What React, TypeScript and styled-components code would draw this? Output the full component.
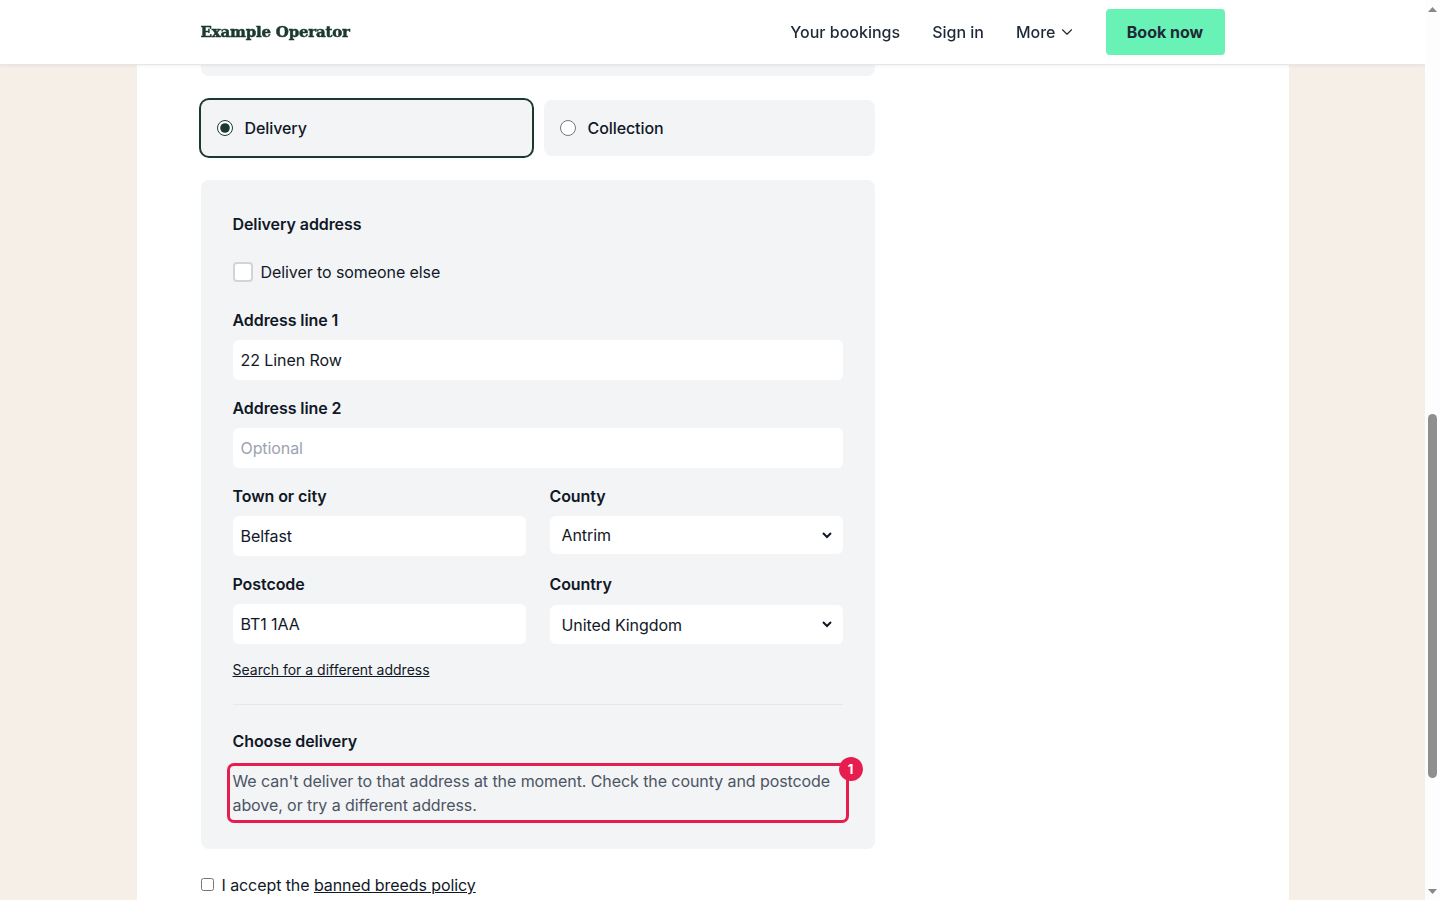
import { useLayoutEffect, useRef, useState } from "react";
import styled, { createGlobalStyle } from "styled-components";
import { ChevronDown } from "lucide-react";

const GlobalStyle = createGlobalStyle`
    * {
        box-sizing: border-box;
    }

    html,
    body {
        height: 100%;
    }

    body {
        margin: 0;
        overflow: hidden;
        background-color: #f6efe8;
        color: #111827;
        font-family: Inter, "Liberation Sans", sans-serif;
        font-size: 16px;
        line-height: 24px;
        letter-spacing: -0.08px;
    }
`;

const ARROW_HEIGHT = 15;

export default function App() {
    const [method, setMethod] = useState("delivery");
    const [thumb, setThumb] = useState({ top: 0, height: 0 });
    const pageRef = useRef<HTMLDivElement>(null);

    const syncThumb = () => {
        const page = pageRef.current;
        if (!page) return;

        const track = page.clientHeight - ARROW_HEIGHT * 2;
        setThumb({
            top: (page.scrollTop / page.scrollHeight) * track,
            height: (page.clientHeight / page.scrollHeight) * track,
        });
    };

    // the reference is photographed part way down the booking form
    useLayoutEffect(() => {
        if (pageRef.current) {
            pageRef.current.scrollTop = 986;
        }
        syncThumb();
    }, []);

    return (
        <Shell>
            <GlobalStyle />
            <Page ref={pageRef} onScroll={syncThumb}>
                <Header>
                    <HeaderInner>
                        <Logo>Example Operator</Logo>
                        <Nav>
                            <NavLink href="#">Your bookings</NavLink>
                            <NavLink href="#">Sign in</NavLink>
                            <MoreButton type="button">
                                More
                                <ChevronDown size={18} strokeWidth={1.5} />
                            </MoreButton>
                            <BookButton type="button">Book now</BookButton>
                        </Nav>
                    </HeaderInner>
                </Header>
                <Main>
                    <Column>
                        <EarlierStep />
                        <MethodGrid>
                            <MethodCard $selected={method === "delivery"}>
                                <MethodRadio
                                    type="radio"
                                    name="method"
                                    checked={method === "delivery"}
                                    onChange={() => setMethod("delivery")}
                                />
                                Delivery
                            </MethodCard>
                            <MethodCard $selected={method === "collection"}>
                                <MethodRadio
                                    type="radio"
                                    name="method"
                                    checked={method === "collection"}
                                    onChange={() => setMethod("collection")}
                                />
                                Collection
                            </MethodCard>
                        </MethodGrid>
                        <Panel>
                            <Heading>Delivery address</Heading>
                            <CheckRow>
                                <BigCheckbox type="checkbox" />
                                Deliver to someone else
                            </CheckRow>
                            <Fields>
                                <Field>
                                    <Label>Address line 1</Label>
                                    <TextInput type="text" defaultValue="22 Linen Row" />
                                </Field>
                                <Field>
                                    <Label>Address line 2</Label>
                                    <TextInput type="text" placeholder="Optional" />
                                </Field>
                                <TwoColumns>
                                    <Field>
                                        <Label>Town or city</Label>
                                        <TextInput type="text" defaultValue="Belfast" />
                                    </Field>
                                    <Field>
                                        <Label>County</Label>
                                        <Select defaultValue="Antrim">
                                            <option>Antrim</option>
                                            <option>Armagh</option>
                                            <option>Down</option>
                                        </Select>
                                    </Field>
                                </TwoColumns>
                                <TwoColumns>
                                    <Field>
                                        <Label>Postcode</Label>
                                        <TextInput type="text" defaultValue="BT1 1AA" />
                                    </Field>
                                    <Field>
                                        <Label>Country</Label>
                                        <Select defaultValue="United Kingdom" $lower>
                                            <option>United Kingdom</option>
                                            <option>Ireland</option>
                                        </Select>
                                    </Field>
                                </TwoColumns>
                            </Fields>
                            <SearchLink href="#">Search for a different address</SearchLink>
                            <Divider />
                            <Heading>Choose delivery</Heading>
                            <ErrorBox>
                                We can't deliver to that address at the moment. Check the county and
                                postcode above, or try a different address.
                                <ErrorBadge>1</ErrorBadge>
                            </ErrorBox>
                        </Panel>
                        <TermsRow>
                            <TermsCheckbox type="checkbox" />
                            <span>
                                I accept the <TermsLink href="#">banned breeds policy</TermsLink>
                            </span>
                        </TermsRow>
                    </Column>
                </Main>
            </Page>
            <ScrollRail>
                <RailArrow>
                    <svg width="9" height="5" viewBox="0 0 9 5">
                        <polygon points="4.5,0 9,5 0,5" fill="#888888" />
                    </svg>
                </RailArrow>
                <RailTrack>
                    <RailThumb style={{ marginTop: thumb.top, height: thumb.height }} />
                </RailTrack>
                <RailArrow $down>
                    <svg width="9" height="5" viewBox="0 0 9 5">
                        <polygon points="0,0 9,0 4.5,5" fill="#888888" />
                    </svg>
                </RailArrow>
            </ScrollRail>
        </Shell>
    );
}

const Shell = styled.div`
    height: 100vh;
    display: flex;
`;

const Page = styled.div`
    flex: 1;
    min-width: 0;
    overflow-y: scroll;
    scrollbar-width: none;
`;

const ScrollRail = styled.div`
    width: 15px;
    flex-shrink: 0;

    display: flex;
    flex-direction: column;

    background-color: #fdfdfd;
`;

const RailArrow = styled.div<{ $down?: boolean }>`
    height: ${ARROW_HEIGHT}px;
    padding: ${(props) => (props.$down ? "3px" : "6px")} 0 0 3px;
    line-height: 0;
`;

const RailTrack = styled.div`
    flex: 1;
    padding: 0 3px;
`;

const RailThumb = styled.div`
    border-radius: 5px;
    background-color: #8f8f8f;
`;

const Header = styled.header`
    position: sticky;
    top: 0;
    z-index: 10;
    height: 65px;
    background-color: #ffffff;
    border-bottom: 1px solid #e5e7eb;
    box-shadow: 0 1px 3px rgba(0, 0, 0, 0.06);
`;

const HeaderInner = styled.div`
    max-width: 1152px;
    height: 64px;
    margin: 0 auto;
    padding: 0 64px;

    display: flex;
    align-items: center;
    justify-content: space-between;
`;

const Logo = styled.div`
    color: #1b3a2d;
    font-family: "DejaVu Serif", "Liberation Serif", serif;
    font-size: 15px;
    font-weight: 700;
    letter-spacing: -0.2px;
    -webkit-text-stroke: 0.5px #1b3a2d;
`;

const Nav = styled.nav`
    display: flex;
    align-items: center;
    gap: 32px;
    letter-spacing: 0;
`;

const NavLink = styled.a`
    color: #1f2937;
    font-weight: 500;
    text-decoration: none;
`;

const MoreButton = styled.button`
    margin-right: -2px;
    padding: 0;

    display: flex;
    align-items: center;
    gap: 2px;

    border: none;
    background: none;
    color: #1f2937;
    font: inherit;
    font-weight: 500;
    letter-spacing: inherit;
`;

const BookButton = styled.button`
    width: 119px;
    height: 46px;

    border: none;
    border-radius: 4px;
    background-color: #69f2b5;
    color: #1f2937;
    font: inherit;
    font-weight: 700;
    letter-spacing: inherit;
`;

const Main = styled.main`
    max-width: 1152px;
    margin: 0 auto;
    padding: 32px 64px 268px;
    background-color: #ffffff;
`;

const Column = styled.div`
    width: 674px;

    display: flex;
    flex-direction: column;
    gap: 24px;
`;

const EarlierStep = styled.section`
    height: 965px;
    border-radius: 8px;
    background-color: #f3f4f6;
`;

const MethodGrid = styled.div`
    display: grid;
    grid-template-columns: 1fr 1fr;
    gap: 12px;
`;

const MethodCard = styled.label<{ $selected: boolean }>`
    height: 56px;
    padding: 0 16px;

    display: flex;
    align-items: center;
    gap: 12px;

    border-radius: 8px;
    background-color: #f3f4f6;
    box-shadow: ${(props) => (props.$selected ? "0 0 0 2px #1b3a2d" : "none")};
    font-weight: 500;
`;

const MethodRadio = styled.input`
    width: 16px;
    height: 16px;
    margin: 0;
    accent-color: #1b3a2d;
`;

const Panel = styled.section`
    padding: 32px;

    display: flex;
    flex-direction: column;

    border-radius: 8px;
    background-color: #f3f4f6;
`;

const Heading = styled.h3`
    margin: 0;
    font-size: 16px;
    font-weight: 600;
    line-height: 24px;
`;

const CheckRow = styled.label`
    margin: 24px 0;

    display: flex;
    align-items: center;
    gap: 8px;
`;

const BigCheckbox = styled.input`
    appearance: none;
    width: 20px;
    height: 20px;
    margin: 0;

    border: 2px solid #d1d5db;
    border-radius: 4px;
    background-color: #ffffff;
`;

const Fields = styled.div`
    display: flex;
    flex-direction: column;
    gap: 16px;
`;

const TwoColumns = styled.div`
    display: grid;
    grid-template-columns: 1fr 1fr;
    gap: 24px;
`;

const Field = styled.div`
    display: flex;
    flex-direction: column;
    gap: 8px;
`;

const Label = styled.label`
    font-weight: 600;
`;

const TextInput = styled.input`
    width: 100%;
    height: 40px;
    padding: 0 8px;

    border: none;
    border-radius: 6px;
    background-color: #ffffff;
    color: #111827;
    font: inherit;
    letter-spacing: inherit;

    &::placeholder {
        color: #9ca3af;
    }
`;

const Select = styled.select<{ $lower?: boolean }>`
    width: 100%;
    height: ${(props) => (props.$lower ? "39px" : "38px")};
    margin-top: ${(props) => (props.$lower ? "1px" : "0")};
    padding: 0 8px;

    border: none;
    border-right: 8px solid #ffffff;
    border-radius: 6px;
    background-color: #ffffff;
    color: #111827;
    font: inherit;
    letter-spacing: inherit;
`;

const SearchLink = styled.a`
    margin-top: 14px;
    color: #111827;
    font-size: 14px;
    line-height: 24px;
    letter-spacing: 0;
    text-decoration: underline;
`;

const Divider = styled.hr`
    width: 100%;
    margin: 22px 0 24px;
    border: none;
    border-top: 1px solid #e5e7eb;
`;

const ErrorBox = styled.div`
    position: relative;
    margin-top: 16px;

    border-radius: 1px;
    outline: 3px solid #e61e4f;
    outline-offset: 3px;
    color: #4b5563;
`;

const ErrorBadge = styled.span`
    position: absolute;
    top: -12px;
    right: -20px;
    width: 24px;
    height: 24px;

    display: flex;
    align-items: center;
    justify-content: center;

    border-radius: 50%;
    background-color: #e61e4f;
    color: #ffffff;
    font-size: 13px;
    font-weight: 700;
`;

const TermsRow = styled.label`
    display: flex;
    align-items: center;
    gap: 8px;
`;

const TermsCheckbox = styled.input`
    margin: 0 0 2px;
`;

const TermsLink = styled.a`
    color: #111827;
    text-decoration: underline;
`;
